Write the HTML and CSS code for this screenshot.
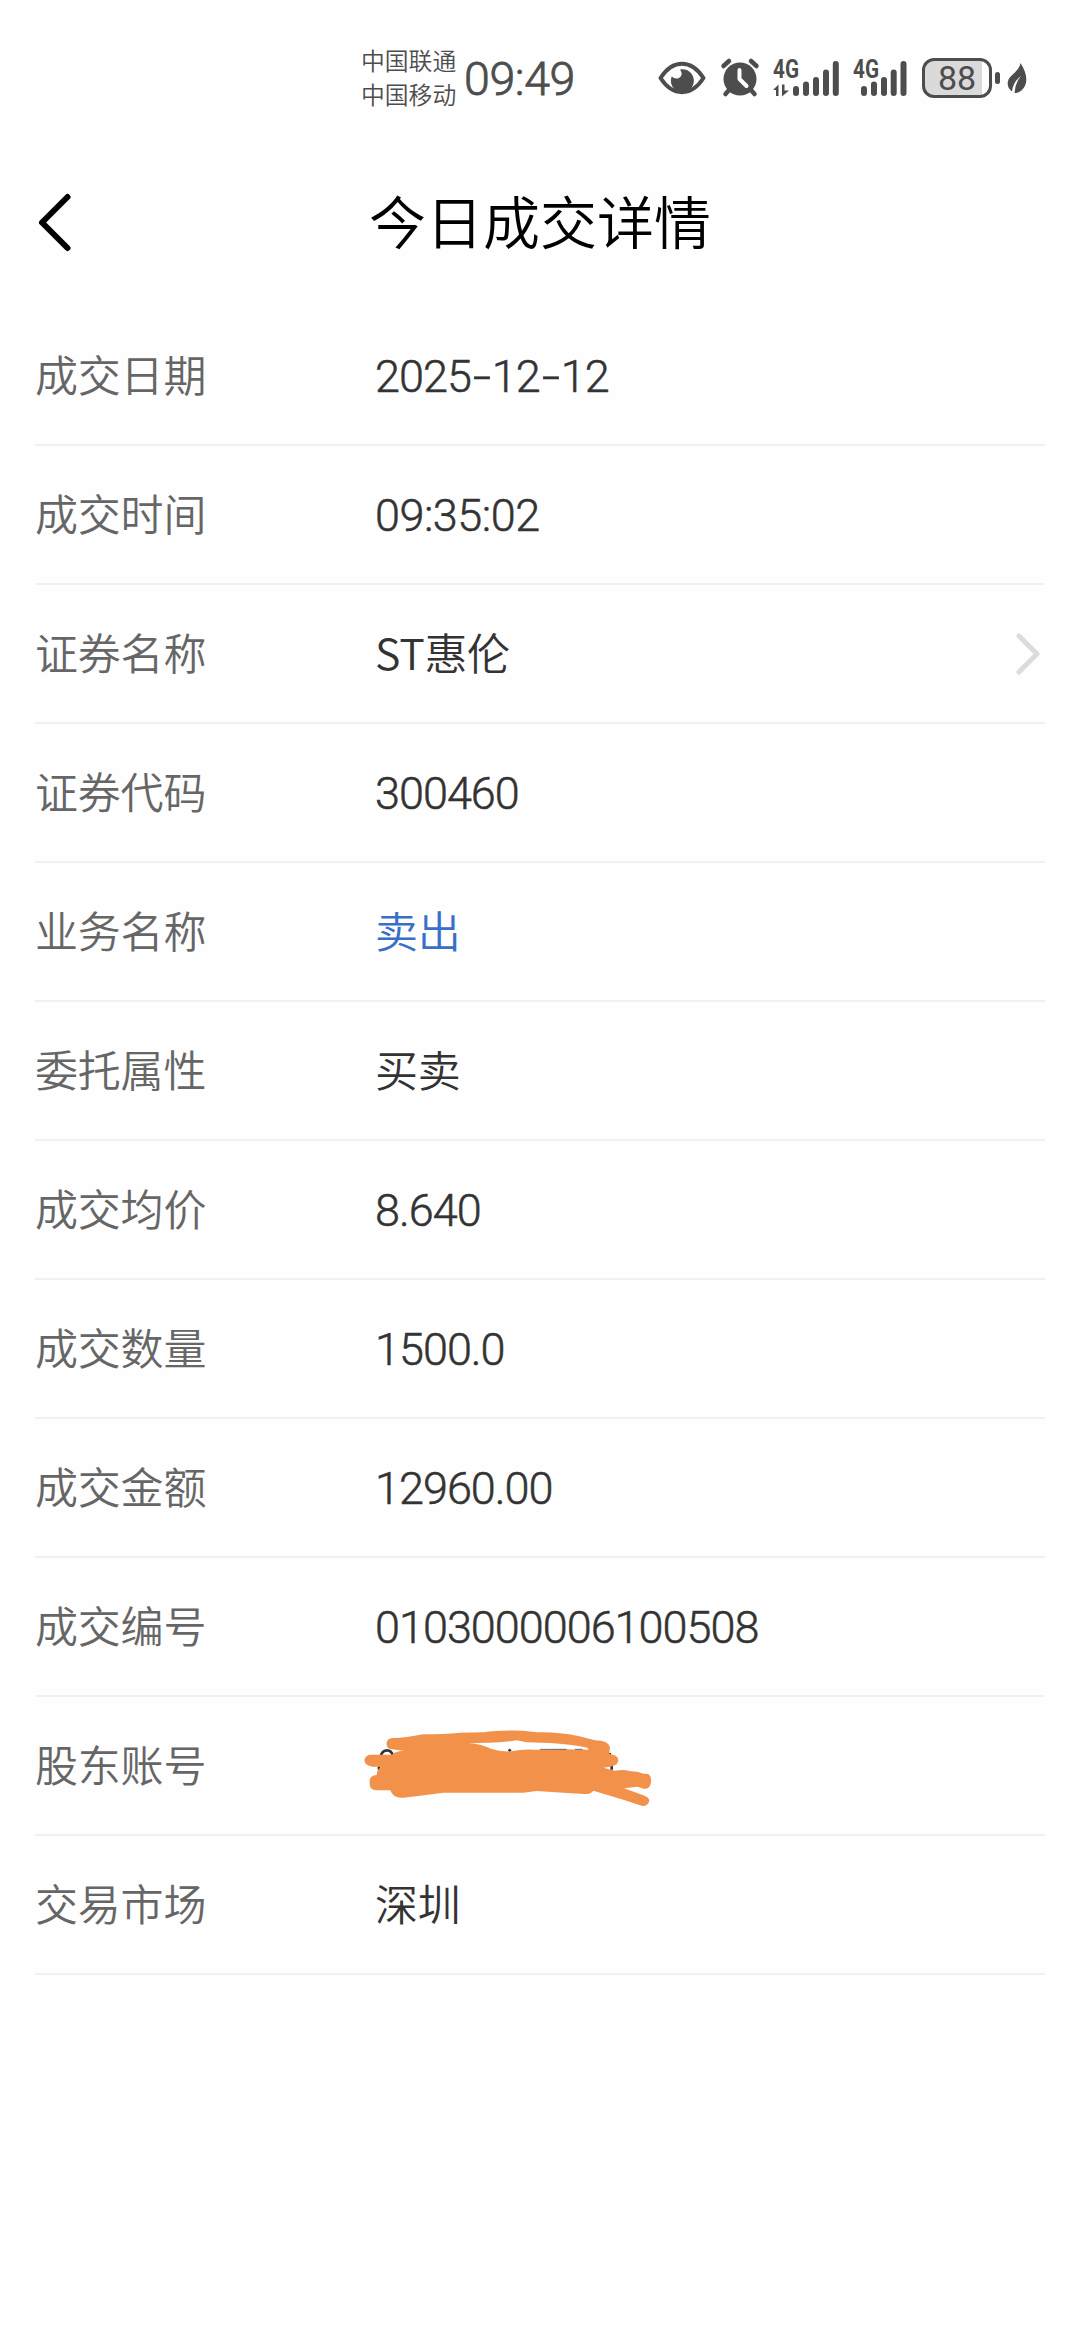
FILE: index.html
```
<!DOCTYPE html>
<html lang="zh-CN">
<head>
  <meta charset="UTF-8">
  <title>今日成交详情</title>
  <meta name="viewport" content="width=device-width, initial-scale=1.0" />
  <link rel="stylesheet" href="styles.css">
</head>
<body>

  <div class="status-bar">
    <div class="carriers">
      <span>中国联通</span>
      <span>中国移动</span>
    </div>
    <div class="clock">09:49</div>
    <div class="status-icons">
      <!-- eye comfort -->
      <svg class="icon-eye" width="48" height="40" viewBox="0 0 48 40">
        <path d="M2.500 20C9 10 16 5.800 24 5.800S39 10 45.500 20C39 30 32 34.200 24 34.200S9 30 2.500 20Z" fill="none" stroke="#4d4d4d" stroke-width="4" stroke-linejoin="round"/>
        <path d="M22 11.500A11.500 11.500 0 1 1 13.700 18.500Q17 21.500 21 20Q26 17 22 11.500Z" fill="#4d4d4d"/>
      </svg>
      <!-- alarm -->
      <svg class="icon-alarm" width="38" height="40" viewBox="0 0 38 40">
        <circle cx="19" cy="21" r="16.500" fill="#4d4d4d"/>
        <path d="M2.500 8L8 3M35.500 8L30 3M8 32L4.500 36M30 32L33.500 36" stroke="#4d4d4d" stroke-width="4.500" stroke-linecap="round"/>
        <path d="M18.500 12V21L25.500 28" fill="none" stroke="#fefefe" stroke-width="4" stroke-linecap="round" stroke-linejoin="round"/>
      </svg>
      <!-- sim 1 -->
      <svg class="icon-signal" width="67" height="40" viewBox="0 0 67 40">
        <text class="net" x="0" y="20" textLength="26" lengthAdjust="spacingAndGlyphs">4G</text>
        <path d="M0 32L5.500 26.500V38H3V32ZM9 26.500H11.500V32.500H16L9 38.500Z" fill="#4d4d4d"/>
        <path d="M23 31V35M33 26.500V35M43 22V35M53 14.500V35M62.800 6V35" stroke="#4d4d4d" stroke-width="6" stroke-linecap="round"/>
      </svg>
      <!-- sim 2 -->
      <svg class="icon-signal2" width="55" height="40" viewBox="0 0 55 40">
        <text class="net" x="0" y="20" textLength="26" lengthAdjust="spacingAndGlyphs">4G</text>
        <path d="M11 31V35M21 26.500V35M31 22V35M40.700 14.500V35M50.500 6V35" stroke="#4d4d4d" stroke-width="6" stroke-linecap="round"/>
      </svg>
      <div class="battery"><span>88</span></div>
      <div class="battery-tip"></div>
      <!-- power saving leaf -->
      <svg class="icon-leaf" width="20" height="32" viewBox="0 0 20 32">
        <path d="M13.500 1C21 13 21 22 15 28Q12 31 7.500 31Q8 21 14 14Q6 20 5 29.500Q0 26 .800 20C2 13 12 10 13.500 1Z" fill="#4d4d4d"/>
      </svg>
    </div>
  </div>

  <div class="header">
    <svg class="back" width="34" height="60" viewBox="0 0 34 60">
      <path d="M30.500 5L5 30.500L30.500 56" fill="none" stroke="#000" stroke-width="6" stroke-linecap="round" stroke-linejoin="round"/>
    </svg>
    <h1>今日成交详情</h1>
  </div>

  <ul class="details">
    <li><span class="label">成交日期</span><span class="value num">2025<i class="dash">-</i>12<i class="dash">-</i>12</span></li>
    <li><span class="label">成交时间</span><span class="value num time">09:35:02</span></li>
    <li>
      <span class="label">证券名称</span><span class="value">ST惠伦</span>
      <svg class="arrow" width="26" height="44" viewBox="0 0 26 44">
        <path d="M4 4L22 22L4 40" fill="none" stroke="#dcdcdc" stroke-width="5" stroke-linecap="round" stroke-linejoin="round"/>
      </svg>
    </li>
    <li><span class="label">证券代码</span><span class="value num">300460</span></li>
    <li><span class="label">业务名称</span><span class="value sell">卖出</span></li>
    <li><span class="label">委托属性</span><span class="value">买卖</span></li>
    <li><span class="label">成交均价</span><span class="value num">8.640</span></li>
    <li><span class="label">成交数量</span><span class="value num">1500.0</span></li>
    <li><span class="label">成交金额</span><span class="value num">12960.00</span></li>
    <li><span class="label">成交编号</span><span class="value num">0103000006100508</span></li>
    <li>
      <span class="label">股东账号</span>
      <!-- account number, scribbled over -->
      <svg class="scribble" width="340" height="136" viewBox="0 0 1020 408">
        <path d="M122 170Q128 154 141 154T159 170M117 202V212M506 157L512 151M809 162V170M815 200V212" fill="none" stroke="#333" stroke-width="8"/>
        <path fill-rule="evenodd" fill="#f2924a" d="M158 117Q190 118 250 106Q310 106 360 101L430 100Q480 93 550 95L590 100Q650 98 715 111L765 124Q805 124 810 145L808 165Q835 168 835 184Q834 204 790 206L825 215Q850 210 868 216L895 219L912 225Q933 222 933 242Q935 268 914 270L892 263L852 268L910 289Q928 296 928 306Q922 324 905 320L850 302L760 275Q752 286 735 285L670 281L590 276L550 281H310L240 290L190 296Q158 298 151 274H110Q89 272 89 255V244Q90 230 110 228Q110 210 125 203H98Q74 200 73 184Q75 167 95 167H147Q160 169 162 162Q172 156 192 155L150 150Q138 145 140 130Q143 118 158 117ZM385 133Q425 135 455 150Q480 159 515 157Q550 149 585 152Q670 149 746 152L742 146Q690 135 630 132L560 130L530 124Q480 132 440 131Z"/>
        <path d="M600 151H680M705 151H728" fill="none" stroke="#333" stroke-width="2"/>
      </svg>
    </li>
    <li><span class="label">交易市场</span><span class="value">深圳</span></li>
  </ul>

</body>
</html>
```
FILE: styles.css
```
* {
  box-sizing: border-box;
}
body {
  margin: 0;
  min-height: 2340px;
  background: #fefefe;
  font-family: "Noto Sans CJK SC", sans-serif;
  font-weight: 350;
  color: #333;
}
svg {
  display: block;
  flex: none;
  overflow: visible;
}
.status-bar {
  display: flex;
  align-items: center;
  height: 156px;
  padding-left: 361px;
  color: #4d4d4d;
}
.carriers {
  display: flex;
  flex-direction: column;
  width: 103px;
  padding-bottom: 3px;
  font-size: 23.8px;
  line-height: 34px;
}
.clock {
  width: 194px;
  padding-top: 1px;
  font-family: Roboto, sans-serif;
  font-size: 46.5px;
  line-height: 60px;
  letter-spacing: -0.4px;
  -webkit-text-stroke: 0.8px #4d4d4d;
}
.status-icons {
  display: flex;
  align-items: center;
}
.icon-alarm {
  margin-left: 15px;
}
.icon-signal {
  margin-left: 14px;
}
.icon-signal2 {
  margin-left: 13px;
}
.net {
  font-family: Roboto, sans-serif;
  font-size: 25px;
  font-weight: bold;
  fill: #4d4d4d;
}
.battery {
  width: 70px;
  height: 40px;
  margin-left: 14px;
  border: 3px solid #4d4d4d;
  border-radius: 12px;
  background: linear-gradient(to right, #dadada 57px, #fefefe 57px);
  font-family: Roboto, sans-serif;
  font-size: 34px;
  font-weight: 400;
  line-height: 35px;
  text-align: center;
}
.battery-tip {
  width: 5px;
  height: 12px;
  margin-left: 3px;
  border-radius: 3px;
  background: #4d4d4d;
}
.icon-leaf {
  margin-left: 7px;
}
.header {
  display: flex;
  align-items: center;
  height: 151px;
  padding: 0 37px;
  color: #000;
}
.header h1 {
  flex: 1;
  margin: 0 34px 0 0;
  font-size: 57px;
  font-weight: 350;
  line-height: 80px;
  text-align: center;
}
.back {
  margin-top: -19px;
}
.header h1 {
  margin-top: -25px;
}
.details {
  margin: 0;
  padding: 0 35px;
  list-style: none;
}
.details li {
  display: flex;
  align-items: center;
  height: 139px;
  border-bottom: 2px solid #f1f1f1;
  font-size: 43px;
  line-height: 60px;
}
.label {
  width: 340px;
  padding-bottom: 5px;
  color: #666;
  letter-spacing: -0.2px;
}
.value {
  flex: 1;
  padding-bottom: 5px;
  letter-spacing: -0.3px;
}
.num {
  padding: 2px 0 0;
  font-family: Roboto, sans-serif;
  font-size: 45px;
  letter-spacing: -1px;
  -webkit-text-stroke: 0.5px #333;
}
.dash {
  display: inline-block;
  width: 21px;
  font-style: normal;
  text-align: center;
  transform: scaleX(1.45);
}
.time {
  letter-spacing: -0.5px;
}
.sell {
  color: #3a6fc9;
}
.arrow {
  margin-right: 4px;
}
.scribble {
  margin: 2px 0 0 -35px;
}
```
